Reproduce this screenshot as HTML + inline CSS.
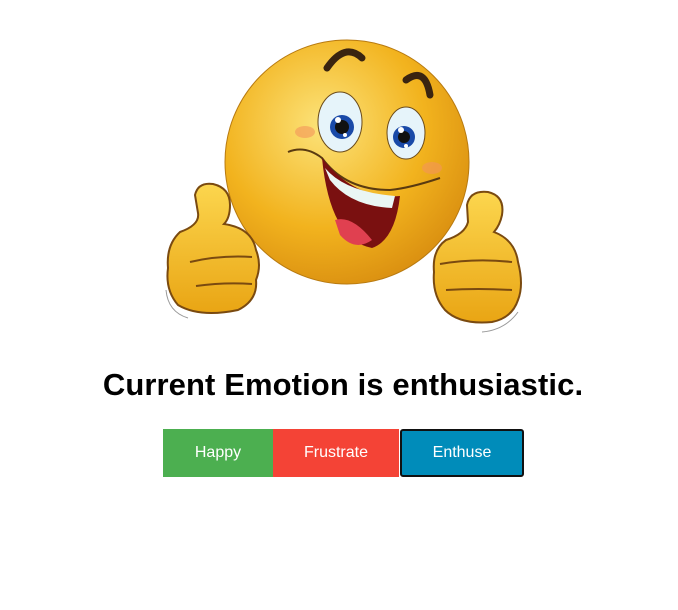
<!DOCTYPE html>
<html><head><meta charset="utf-8"><style>
body{margin:0;background:#fff;width:678px;height:610px;position:relative;font-family:"Liberation Sans",Arial,sans-serif;}
h1{position:absolute;top:367px;left:0;width:686px;text-align:center;margin:0;font-size:31px;font-weight:bold;color:#000;letter-spacing:0.1px}
.b{position:absolute;top:429px;height:48px;color:#fff;font-size:16px;text-align:center;line-height:48px;box-sizing:border-box}
</style></head><body>
<svg style="position:absolute;left:160px;top:30px" width="370" height="320" viewBox="160 30 370 320">
<defs>
<radialGradient id="f" cx="0.4" cy="0.35" r="0.7"><stop offset="0" stop-color="#fce37a"/><stop offset="0.6" stop-color="#f2b31e"/><stop offset="1" stop-color="#d98e10"/></radialGradient>
<linearGradient id="h" x1="0" y1="0" x2="0" y2="1"><stop offset="0" stop-color="#fcd64e"/><stop offset="1" stop-color="#e9a514"/></linearGradient>
</defs>
<circle cx="347" cy="162" r="122" fill="url(#f)" stroke="#b87a10" stroke-width="1"/>
<path d="M327 68 Q345 42 362 58" stroke="#3a2410" stroke-width="7" fill="none" stroke-linecap="round"/>
<path d="M406 80 Q425 66 430 95" stroke="#3a2410" stroke-width="7" fill="none" stroke-linecap="round"/>
<ellipse cx="340" cy="122" rx="22" ry="30" fill="#e6f4fa" stroke="#6a4a1a"/>
<ellipse cx="406" cy="133" rx="19" ry="26" fill="#e6f4fa" stroke="#6a4a1a"/>
<circle cx="342" cy="127" r="12" fill="#1a4aa8"/><circle cx="342" cy="127" r="7" fill="#111"/><circle cx="338" cy="120" r="3" fill="#fff"/><circle cx="345" cy="135" r="2" fill="#fff"/>
<circle cx="404" cy="137" r="11" fill="#1a4aa8"/><circle cx="404" cy="137" r="6" fill="#111"/><circle cx="401" cy="130" r="3" fill="#fff"/><circle cx="406" cy="146" r="2" fill="#fff"/>
<ellipse cx="305" cy="132" rx="10" ry="6" fill="#f4945a" opacity=".6"/><ellipse cx="432" cy="168" rx="10" ry="6" fill="#f4945a" opacity=".6"/>
<path d="M288 152 Q305 145 322 158 Q345 190 390 190 Q410 188 440 178" stroke="#5a3a10" stroke-width="2" fill="none"/>
<path d="M322 158 Q330 240 372 248 Q395 240 400 196 Q355 200 322 158Z" fill="#7a1010"/>
<path d="M325 168 Q345 192 395 196 L392 208 Q350 206 330 180Z" fill="#eaf6f4"/>
<path d="M335 220 Q352 215 372 240 Q355 252 340 235Z" fill="#e04050"/>
<path d="M195 195 Q198 182 213 184 Q230 188 230 205 Q230 218 224 224 Q252 228 256 250 Q262 265 256 280 Q258 300 238 310 Q200 318 178 305 Q165 290 168 268 Q166 245 180 232 Q200 225 198 213Z" fill="url(#h)" stroke="#7a4a10" stroke-width="2"/>
<path d="M190 262 Q220 255 252 257 M196 286 Q225 282 252 284" stroke="#7a4a10" stroke-width="2" fill="none"/>
<path d="M467 205 Q470 190 488 192 Q505 196 502 215 Q500 225 494 232 Q515 240 518 262 Q524 285 518 300 Q512 318 492 322 Q460 325 445 310 Q432 295 434 272 Q432 250 446 240 Q465 234 468 222Z" fill="url(#h)" stroke="#7a4a10" stroke-width="2"/>
<path d="M440 264 Q475 258 512 262 M446 290 Q478 288 512 290" stroke="#7a4a10" stroke-width="2" fill="none"/>
<path d="M166 290 Q168 312 188 318 M482 332 Q505 330 518 312" stroke="#999" stroke-width="1" fill="none"/>
</svg>
<h1>Current Emotion is enthusiastic.</h1>
<div class="b" style="left:163px;width:110px;background:#4caf50">Happy</div>
<div class="b" style="left:273px;width:126px;background:#f44336">Frustrate</div>
<div class="b" style="left:400px;width:124px;background:#008cba;border:2px solid #111;border-radius:3px;line-height:44px">Enthuse</div>
</body></html>
